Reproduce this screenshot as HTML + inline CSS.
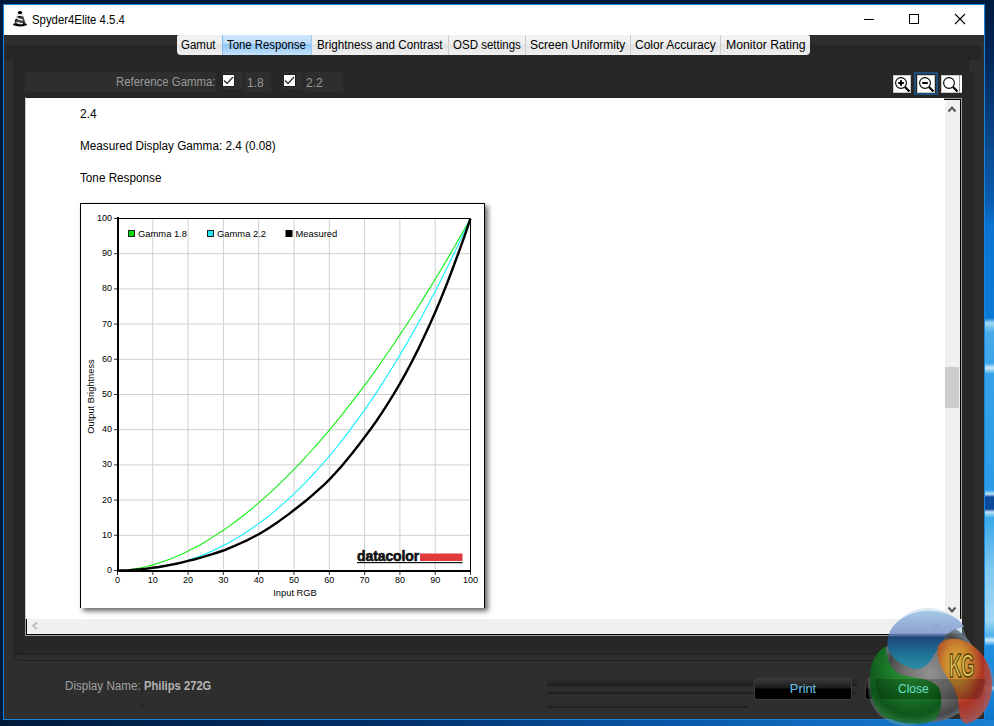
<!DOCTYPE html>
<html><head><meta charset="utf-8">
<style>
*{margin:0;padding:0;box-sizing:border-box}
html,body{width:994px;height:726px;overflow:hidden;background:#001a3a;font-family:"Liberation Sans",sans-serif;position:relative}
.a{position:absolute}
#desk-r{left:984px;top:0;width:10px;height:726px;background:linear-gradient(180deg,#001a3d 0px,#02285a 60px,#0a4a90 150px,#0a5eb4 205px,#0a74d4 225px,#0a7ad8 318px,#a0d8f5 323px,#48aaea 332px,#3aa6ea 363px,#d0ecfa 368px,#34a2e8 374px,#2a9ce6 490px,#c0e4f8 494px,#0a4a9a 497px,#0a4a9a 509px,#c0e4f8 512px,#38a8ea 518px,#80c8f2 570px,#a0d8f5 620px,#50b0ec 636px,#d0ecfa 640px,#1e90e0 646px,#1a88dc 685px,#a0d0f0 688px,#1a86da 692px,#0a70c8 726px)}
#desk-b{left:0;top:720px;width:994px;height:6px;background:linear-gradient(90deg,#001a3a 0px,#02306a 400px,#0a5cb0 700px,#1a80d0 994px)}
#win{left:3px;top:4px;width:982px;height:716px;background:#1883d7}
#title{left:4px;top:5px;width:980px;height:30px;background:#fff}
#body{left:4px;top:35px;width:980px;height:684px;background:#2e2e2e}
.ttl{font-size:12px;color:#000;white-space:nowrap}
.tabbar{left:5px;top:45px;width:977px;height:15px;background:#262626;border-radius:4px}
.tabs{left:177px;top:35px;height:20px;width:633px;background:linear-gradient(#f3f3f3 0%,#efefef 42%,#e5e5e5 52%,#efefef 100%);border-radius:2px 2px 4px 4px;overflow:hidden}
.tab{position:absolute;top:0;height:20px;font-size:12px;color:#000;white-space:nowrap;line-height:20px}
.tab.sep{border-left:1px solid #cdcdcd}
.tab.sel{background:linear-gradient(#d2e7fc 0%,#bcdcfa 40%,#8cc4f5 50%,#a6d2f8 70%,#c4e2fb 100%);border-left:1px solid #7fbaf0;border-right:1px solid #9cc9f0}
.tab span{display:inline-block;transform-origin:0 0}
.vline{background:#232323}
.gam{font-size:12px;color:#9a9a9a;white-space:nowrap}
.cell{background:#2e2e2e}
.chk{background:#fff}
.zb{background:#fff;border:1px solid #c8c8c8}
#content{left:25px;top:97px;width:920px;height:522px;background:#fff;border-left:1px solid #c8c8c8;border-top:1px solid #1e1e1e}
.txt{font-size:12px;color:#000;white-space:nowrap}
.ct{font-family:"Liberation Sans",sans-serif;font-size:9px;fill:#000}
.dc{font-family:"Liberation Sans",sans-serif;font-size:14px;font-weight:bold;fill:#111;stroke:#111;stroke-width:0.6px;letter-spacing:-0.1px}
</style></head><body>
<div class="a" id="desk-r"></div>
<div class="a" id="desk-b"></div>
<div class="a" id="win"></div>
<div class="a" id="title"></div>
<div class="a" id="body"></div>

<!-- title bar -->
<svg class="a" style="left:10px;top:8px" width="20" height="20" viewBox="0 0 20 20">
  <ellipse cx="10" cy="4.6" rx="2.2" ry="1.7" fill="#000"/>
  <path d="M7.5,6 L12.5,6 L15.5,15 L4.5,15 Z" fill="#444"/>
  <ellipse cx="10" cy="16.5" rx="7" ry="1.9" fill="#000"/>
  <path d="M6.5,8 Q10,5.8 13,7.8" fill="none" stroke="#fff" stroke-width="1.6"/>
  <path d="M6,9.5 Q8.5,11.5 12.5,12" fill="none" stroke="#fff" stroke-width="1.6"/>
  <path d="M6.5,14.5 Q10,15.8 13,15.6" fill="none" stroke="#eee" stroke-width="1.4"/>
  <path d="M8,8.8 L11,8.8" stroke="#000" stroke-width="1"/>
  <path d="M5,13 L7,11" stroke="#000" stroke-width="1.3"/>
</svg>
<div class="a ttl" style="left:32px;top:13px;transform:scaleX(0.947);transform-origin:0 0">Spyder4Elite 4.5.4</div>
<div class="a" style="left:864px;top:19px;width:10px;height:1px;background:#000"></div>
<div class="a" style="left:909px;top:14px;width:10px;height:10px;border:1px solid #000"></div>
<svg class="a" style="left:954px;top:13px" width="12" height="12" viewBox="0 0 12 12"><path d="M1,1 L11,11 M11,1 L1,11" stroke="#000" stroke-width="1.1"/></svg>

<!-- tab bar -->
<div class="a tabbar"></div>
<div class="a tabs">
  <div class="tab" style="left:0;width:45px;padding-left:4px"><span style="transform:scaleX(0.96)">Gamut</span></div>
  <div class="tab sel" style="left:45px;width:90px;padding-left:4px"><span style="transform:scaleX(0.945)">Tone Response</span></div>
  <div class="tab" style="left:135px;width:136px;padding-left:5px"><span style="transform:scaleX(0.975)">Brightness and Contrast</span></div>
  <div class="tab sep" style="left:271px;width:77px;padding-left:4px"><span style="transform:scaleX(0.96)">OSD settings</span></div>
  <div class="tab sep" style="left:348px;width:105px;padding-left:4px"><span style="transform:scaleX(1.0)">Screen Uniformity</span></div>
  <div class="tab sep" style="left:453px;width:90px;padding-left:4px"><span style="transform:scaleX(1.0)">Color Accuracy</span></div>
  <div class="tab sep" style="left:543px;width:90px;padding-left:5px"><span style="transform:scaleX(1.02)">Monitor Rating</span></div>
</div>

<!-- panel lines -->
<div class="a" style="left:14px;top:60px;width:961px;height:595px;background:#272727;border-left:1px solid #212121;border-bottom:1px solid #212121;border-bottom-left-radius:6px"></div>
<div class="a" style="left:14px;top:652px;width:961px;height:9px;border-left:1px solid #222;border-bottom:1px solid #222;border-bottom-left-radius:6px"></div>
<div class="a" style="left:959px;top:60px;width:1px;height:12px;background:#232323"></div>
<div class="a" style="left:968px;top:60px;width:1px;height:12px;background:#232323"></div>
<div class="a" style="left:969px;top:60px;width:6px;height:12px;background:#2e2e2e"></div>

<!-- reference gamma -->
<div class="a cell" style="left:25px;top:72px;width:191px;height:20px"></div>
<div class="a gam" style="left:116px;top:75px;transform:scaleX(0.95);transform-origin:0 0">Reference Gamma:</div>
<div class="a cell" style="left:222px;top:72px;width:21px;height:17px"></div>
<div class="a chk" style="left:222px;top:74px;width:13px;height:13px;border:1px solid #1e1e1e"></div>
<svg class="a" style="left:223px;top:75px" width="11" height="11"><path d="M1,5.5 L4,8.5 L10,2" fill="none" stroke="#333" stroke-width="1.4"/></svg>
<div class="a cell" style="left:245px;top:72px;width:26px;height:20px"></div>
<div class="a gam" style="left:247px;top:76px">1.8</div>
<div class="a cell" style="left:282px;top:72px;width:21px;height:17px"></div>
<div class="a chk" style="left:283px;top:74px;width:13px;height:13px;border:1px solid #1e1e1e"></div>
<svg class="a" style="left:284px;top:75px" width="11" height="11"><path d="M1,5.5 L4,8.5 L10,2" fill="none" stroke="#333" stroke-width="1.4"/></svg>
<div class="a cell" style="left:305px;top:72px;width:38px;height:20px"></div>
<div class="a gam" style="left:306px;top:76px">2.2</div>

<!-- zoom buttons -->
<div class="a zb" style="left:893px;top:75px;width:18px;height:18px"></div>
<div class="a" style="left:914px;top:72px;width:24px;height:23px;border:2px solid #1d4d78"></div>
<div class="a zb" style="left:917px;top:75px;width:18px;height:18px"></div>
<div class="a zb" style="left:941px;top:75px;width:21px;height:18px;border-right:none"></div>
<div class="a" style="left:959px;top:75px;width:1px;height:18px;background:#9a9a9a"></div>
<svg class="a" style="left:893px;top:75px" width="70" height="18" viewBox="0 0 70 18">
  <circle cx="8" cy="8" r="5.4" fill="none" stroke="#000" stroke-width="1.1"/>
  <path d="M12,12 L16.5,16.5" stroke="#000" stroke-width="2.2"/>
  <path d="M5.2,8 H10.8 M8,5.2 V10.8" stroke="#000" stroke-width="2"/>
  <circle cx="32" cy="8" r="5.4" fill="none" stroke="#000" stroke-width="1.1"/>
  <path d="M36,12 L40.5,16.5" stroke="#000" stroke-width="2.2"/>
  <path d="M29.2,8 H34.8" stroke="#000" stroke-width="2"/>
  <circle cx="56" cy="8" r="5.4" fill="none" stroke="#000" stroke-width="1.1"/>
  <path d="M60,12 L64.5,16.5" stroke="#000" stroke-width="2.2"/>
</svg>

<!-- content -->
<div class="a" id="content"></div>
<div class="a txt" style="left:80px;top:107px">2.4</div>
<div class="a txt" style="left:80px;top:139px;transform:scaleX(0.978);transform-origin:0 0">Measured Display Gamma: 2.4 (0.08)</div>
<div class="a txt" style="left:80px;top:171px;transform:scaleX(0.976);transform-origin:0 0">Tone Response</div>

<!-- chart frame -->
<div class="a" style="left:80px;top:203px;width:405px;height:405px;background:#fff;border:1px solid #000;border-bottom:none;box-shadow:3px 3px 5px rgba(0,0,0,.6)"></div>
<svg class="a" style="left:0;top:0" width="994" height="726" viewBox="0 0 994 726">
<line x1="152.8" y1="219" x2="152.8" y2="569" stroke="#cfcfcf" stroke-width="1"/>
<line x1="119" y1="535.3" x2="470" y2="535.3" stroke="#cfcfcf" stroke-width="1"/>
<line x1="188.1" y1="219" x2="188.1" y2="569" stroke="#cfcfcf" stroke-width="1"/>
<line x1="119" y1="500.1" x2="470" y2="500.1" stroke="#cfcfcf" stroke-width="1"/>
<line x1="223.4" y1="219" x2="223.4" y2="569" stroke="#cfcfcf" stroke-width="1"/>
<line x1="119" y1="464.9" x2="470" y2="464.9" stroke="#cfcfcf" stroke-width="1"/>
<line x1="258.7" y1="219" x2="258.7" y2="569" stroke="#cfcfcf" stroke-width="1"/>
<line x1="119" y1="429.7" x2="470" y2="429.7" stroke="#cfcfcf" stroke-width="1"/>
<line x1="294.0" y1="219" x2="294.0" y2="569" stroke="#cfcfcf" stroke-width="1"/>
<line x1="119" y1="394.5" x2="470" y2="394.5" stroke="#cfcfcf" stroke-width="1"/>
<line x1="329.3" y1="219" x2="329.3" y2="569" stroke="#cfcfcf" stroke-width="1"/>
<line x1="119" y1="359.3" x2="470" y2="359.3" stroke="#cfcfcf" stroke-width="1"/>
<line x1="364.6" y1="219" x2="364.6" y2="569" stroke="#cfcfcf" stroke-width="1"/>
<line x1="119" y1="324.1" x2="470" y2="324.1" stroke="#cfcfcf" stroke-width="1"/>
<line x1="399.9" y1="219" x2="399.9" y2="569" stroke="#cfcfcf" stroke-width="1"/>
<line x1="119" y1="288.9" x2="470" y2="288.9" stroke="#cfcfcf" stroke-width="1"/>
<line x1="435.2" y1="219" x2="435.2" y2="569" stroke="#cfcfcf" stroke-width="1"/>
<line x1="119" y1="253.7" x2="470" y2="253.7" stroke="#cfcfcf" stroke-width="1"/>
<path d="M118,218.5 H470.5 V570" fill="none" stroke="#000" stroke-width="1"/>
<line x1="114" y1="570.5" x2="117" y2="570.5" stroke="#333" stroke-width="1"/>
<text x="112" y="573.0" text-anchor="end" class="ct">0</text>
<line x1="117.5" y1="572" x2="117.5" y2="575" stroke="#333" stroke-width="1"/>
<text x="117.5" y="583" text-anchor="middle" class="ct">0</text>
<line x1="114" y1="535.3" x2="117" y2="535.3" stroke="#333" stroke-width="1"/>
<text x="112" y="537.8" text-anchor="end" class="ct">10</text>
<line x1="152.8" y1="572" x2="152.8" y2="575" stroke="#333" stroke-width="1"/>
<text x="152.8" y="583" text-anchor="middle" class="ct">10</text>
<line x1="114" y1="500.1" x2="117" y2="500.1" stroke="#333" stroke-width="1"/>
<text x="112" y="502.6" text-anchor="end" class="ct">20</text>
<line x1="188.1" y1="572" x2="188.1" y2="575" stroke="#333" stroke-width="1"/>
<text x="188.1" y="583" text-anchor="middle" class="ct">20</text>
<line x1="114" y1="464.9" x2="117" y2="464.9" stroke="#333" stroke-width="1"/>
<text x="112" y="467.4" text-anchor="end" class="ct">30</text>
<line x1="223.4" y1="572" x2="223.4" y2="575" stroke="#333" stroke-width="1"/>
<text x="223.4" y="583" text-anchor="middle" class="ct">30</text>
<line x1="114" y1="429.7" x2="117" y2="429.7" stroke="#333" stroke-width="1"/>
<text x="112" y="432.2" text-anchor="end" class="ct">40</text>
<line x1="258.7" y1="572" x2="258.7" y2="575" stroke="#333" stroke-width="1"/>
<text x="258.7" y="583" text-anchor="middle" class="ct">40</text>
<line x1="114" y1="394.5" x2="117" y2="394.5" stroke="#333" stroke-width="1"/>
<text x="112" y="397.0" text-anchor="end" class="ct">50</text>
<line x1="294.0" y1="572" x2="294.0" y2="575" stroke="#333" stroke-width="1"/>
<text x="294.0" y="583" text-anchor="middle" class="ct">50</text>
<line x1="114" y1="359.3" x2="117" y2="359.3" stroke="#333" stroke-width="1"/>
<text x="112" y="361.8" text-anchor="end" class="ct">60</text>
<line x1="329.3" y1="572" x2="329.3" y2="575" stroke="#333" stroke-width="1"/>
<text x="329.3" y="583" text-anchor="middle" class="ct">60</text>
<line x1="114" y1="324.1" x2="117" y2="324.1" stroke="#333" stroke-width="1"/>
<text x="112" y="326.6" text-anchor="end" class="ct">70</text>
<line x1="364.6" y1="572" x2="364.6" y2="575" stroke="#333" stroke-width="1"/>
<text x="364.6" y="583" text-anchor="middle" class="ct">70</text>
<line x1="114" y1="288.9" x2="117" y2="288.9" stroke="#333" stroke-width="1"/>
<text x="112" y="291.4" text-anchor="end" class="ct">80</text>
<line x1="399.9" y1="572" x2="399.9" y2="575" stroke="#333" stroke-width="1"/>
<text x="399.9" y="583" text-anchor="middle" class="ct">80</text>
<line x1="114" y1="253.7" x2="117" y2="253.7" stroke="#333" stroke-width="1"/>
<text x="112" y="256.2" text-anchor="end" class="ct">90</text>
<line x1="435.2" y1="572" x2="435.2" y2="575" stroke="#333" stroke-width="1"/>
<text x="435.2" y="583" text-anchor="middle" class="ct">90</text>
<line x1="114" y1="218.5" x2="117" y2="218.5" stroke="#333" stroke-width="1"/>
<text x="112" y="221.0" text-anchor="end" class="ct">100</text>
<line x1="470.5" y1="572" x2="470.5" y2="575" stroke="#333" stroke-width="1"/>
<text x="470.5" y="583" text-anchor="middle" class="ct">100</text>
<path d="M117.5,570.5 L123.4,570.3 L129.3,569.7 L135.2,568.9 L141.0,567.8 L146.9,566.5 L152.8,564.9 L158.7,563.1 L164.6,561.1 L170.4,558.9 L176.3,556.5 L182.2,553.9 L188.1,551.1 L194.0,548.1 L199.9,544.9 L205.8,541.5 L211.6,537.9 L217.5,534.1 L223.4,530.2 L229.3,526.1 L235.2,521.8 L241.1,517.3 L246.9,512.7 L252.8,507.8 L258.7,502.9 L264.6,497.7 L270.5,492.4 L276.4,486.9 L282.2,481.2 L288.1,475.4 L294.0,469.4 L299.9,463.3 L305.8,457.0 L311.6,450.5 L317.5,443.9 L323.4,437.1 L329.3,430.1 L335.2,423.1 L341.1,415.8 L346.9,408.4 L352.8,400.8 L358.7,393.1 L364.6,385.3 L370.5,377.3 L376.4,369.1 L382.2,360.8 L388.1,352.3 L394.0,343.7 L399.9,334.9 L405.8,326.0 L411.7,317.0 L417.6,307.8 L423.4,298.4 L429.3,288.9 L435.2,279.3 L441.1,269.5 L447.0,259.6 L452.8,249.5 L458.7,239.3 L464.6,229.0 L470.5,218.5" fill="none" stroke="#10f010" stroke-width="1.1"/>
<path d="M117.5,570.5 L123.4,570.5 L129.3,570.3 L135.2,570.0 L141.0,569.6 L146.9,569.0 L152.8,568.3 L158.7,567.4 L164.6,566.3 L170.4,565.1 L176.3,563.7 L182.2,562.1 L188.1,560.3 L194.0,558.3 L199.9,556.2 L205.8,553.8 L211.6,551.3 L217.5,548.5 L223.4,545.6 L229.3,542.5 L235.2,539.1 L241.1,535.5 L246.9,531.8 L252.8,527.8 L258.7,523.6 L264.6,519.2 L270.5,514.6 L276.4,509.7 L282.2,504.7 L288.1,499.4 L294.0,493.9 L299.9,488.2 L305.8,482.2 L311.6,476.0 L317.5,469.6 L323.4,463.0 L329.3,456.1 L335.2,449.0 L341.1,441.6 L346.9,434.1 L352.8,426.2 L358.7,418.2 L364.6,409.9 L370.5,401.4 L376.4,392.6 L382.2,383.6 L388.1,374.3 L394.0,364.8 L399.9,355.1 L405.8,345.1 L411.7,334.8 L417.6,324.3 L423.4,313.6 L429.3,302.6 L435.2,291.3 L441.1,279.8 L447.0,268.1 L452.8,256.1 L458.7,243.8 L464.6,231.3 L470.5,218.5" fill="none" stroke="#10f0ff" stroke-width="1.1"/>
<path d="M117.5,570.5 L123.4,570.4 L129.3,570.2 L135.2,569.8 L141.0,569.3 L146.9,568.6 L152.8,567.8 L158.7,567.0 L164.6,566.0 L170.4,564.9 L176.3,563.7 L182.2,562.4 L188.1,560.9 L194.0,559.5 L199.9,557.9 L205.8,556.2 L211.6,554.4 L217.5,552.5 L223.4,550.5 L229.3,548.1 L235.2,545.7 L241.1,543.0 L246.9,540.3 L252.8,537.3 L258.7,534.2 L264.6,530.7 L270.5,527.0 L276.4,523.1 L282.2,518.9 L288.1,514.6 L294.0,510.0 L299.9,505.5 L305.8,500.8 L311.6,495.9 L317.5,490.7 L323.4,485.3 L329.3,479.6 L335.2,473.3 L341.1,466.7 L346.9,459.8 L352.8,452.6 L358.7,445.0 L364.6,437.1 L370.5,429.2 L376.4,421.0 L382.2,412.3 L388.1,403.2 L394.0,393.7 L399.9,383.7 L405.8,373.1 L411.7,362.0 L417.6,350.4 L423.4,338.3 L429.3,325.6 L435.2,312.3 L441.1,298.2 L447.0,283.5 L452.8,268.2 L458.7,252.3 L464.6,235.8 L470.5,218.5" fill="none" stroke="#000" stroke-width="2.4"/>
<line x1="118" y1="217" x2="118" y2="572" stroke="#000" stroke-width="2"/>
<line x1="117" y1="571" x2="471" y2="571" stroke="#000" stroke-width="2"/>
<rect x="128.5" y="230.5" width="6" height="6" fill="#00e000" stroke="#222" stroke-width="1"/>
<text x="138" y="237" class="ct" style="font-size:9.4px">Gamma 1.8</text>
<rect x="207.5" y="230.5" width="6" height="6" fill="#22e6f0" stroke="#222" stroke-width="1"/>
<text x="217" y="237" class="ct" style="font-size:9.4px">Gamma 2.2</text>
<rect x="286" y="230.5" width="6" height="6" fill="#000" stroke="#000" stroke-width="1"/>
<text x="295.5" y="237" class="ct" style="font-size:9.4px">Measured</text>
<text x="295" y="596" text-anchor="middle" class="ct" style="font-size:9.3px">Input RGB</text>
<text x="0" y="0" text-anchor="middle" class="ct" style="font-size:9.3px" transform="translate(93.6,396.5) rotate(-90)">Output Brightness</text>
<text x="357" y="560.5" class="dc">datacolor</text>
<rect x="420" y="553.5" width="42.5" height="7.5" fill="#e03a3a"/>
<rect x="357" y="562" width="105.5" height="1.2" fill="#111"/>
</svg>

<!-- scrollbars -->
<div class="a" style="left:944px;top:98px;width:18px;height:1px;background:#a0a0a0"></div>
<div class="a" style="left:944px;top:99px;width:17px;height:1px;background:#000"></div>
<div class="a" style="left:945px;top:100px;width:15px;height:519px;background:#f0f0f0"></div>
<div class="a" style="left:945px;top:367px;width:14px;height:41px;background:#cdcdcd"></div>
<div class="a" style="left:960px;top:99px;width:1px;height:520px;background:#000"></div>
<div class="a" style="left:961px;top:98px;width:1px;height:521px;background:#a0a0a0"></div>
<div class="a" style="left:25px;top:619px;width:937px;height:17px;background:#a0a0a0"></div>
<div class="a" style="left:26px;top:619px;width:936px;height:16px;background:#000"></div>
<div class="a" style="left:27px;top:619px;width:935px;height:15px;background:#f0f0f0"></div>
<svg class="a" style="left:945px;top:99px" width="15" height="535">
  <path d="M3.5,12.5 L7,8.5 L10.5,12.5" fill="none" stroke="#555" stroke-width="2"/>
  <path d="M3.5,508.5 L7,512.5 L10.5,508.5" fill="none" stroke="#555" stroke-width="2"/>
</svg>
<svg class="a" style="left:25px;top:619px" width="937" height="16">
  <path d="M12,3.5 L8,6.8 L12,10" fill="none" stroke="#c0c0c0" stroke-width="2"/>
  <path d="M908.5,3.5 L912.5,6.8 L908.5,10" fill="none" stroke="#8a8ab8" stroke-width="2"/>
</svg>

<!-- bottom -->
<div class="a gam" style="left:65px;top:679px;color:#a0a0a0;transform:scaleX(0.97);transform-origin:0 0">Display Name:</div>
<div class="a gam" style="left:144px;top:679px;color:#b4b4b4;font-weight:bold;transform:scaleX(0.935);transform-origin:0 0">Philips 272G</div>
<div class="a" style="left:142px;top:689px;width:1px;height:5px;background:#1c1c1c"></div><div class="a" style="left:142px;top:703px;width:1px;height:4px;background:#1c1c1c"></div>
<div class="a" style="left:547px;top:679px;width:310px;height:7px;background:linear-gradient(#2a2a2a,#242424);border-bottom:1px solid #1c1c1c"></div>
<div class="a" style="left:547px;top:689px;width:310px;height:5px;background:linear-gradient(#303030,#262626);border-bottom:1px solid #1c1c1c"></div>
<div class="a" style="left:547px;top:704px;width:201px;height:4px;background:linear-gradient(#2e2e2e,#262626);border-bottom:1px solid #1c1c1c"></div>
<div class="a" style="left:754px;top:678px;width:98px;height:22px;border-radius:3px;background:linear-gradient(#3a3a3a,#1a1a1a 45%,#000 50%,#000);border:1px solid #3c3c3c"></div>
<div class="a" style="left:754px;top:681px;width:98px;text-align:center;font-size:12.8px;color:#64c4ea">Print</div>
<div class="a" style="left:865px;top:678px;width:97px;height:22px;border-radius:3px;background:linear-gradient(#3a3a3a,#1a1a1a 45%,#000 50%,#000);border:1px solid #3c3c3c"></div>


<!-- KG logo -->
<svg class="a" style="left:862px;top:602px" width="132" height="124" viewBox="0 0 132 124">
  <defs>
    <clipPath id="lc"><circle cx="68" cy="70" r="56"/></clipPath>
    <radialGradient id="gs" cx="0.5" cy="0.52" r="0.5"><stop offset="0" stop-color="#9a9a9a"/><stop offset="0.5" stop-color="#787878"/><stop offset="0.85" stop-color="#4a4a4a"/><stop offset="1" stop-color="#6a7a88"/></radialGradient>
    <linearGradient id="gbl" x1="0" y1="0" x2="0" y2="1"><stop offset="0" stop-color="#9cc4e4"/><stop offset="0.38" stop-color="#8a9cd0"/><stop offset="0.45" stop-color="#1e4a80"/><stop offset="0.75" stop-color="#1f7aa0"/><stop offset="1" stop-color="#2a96b0"/></linearGradient>
    <radialGradient id="gg" cx="0.6" cy="0.25" r="0.85"><stop offset="0" stop-color="#3aa844"/><stop offset="0.4" stop-color="#1a8428"/><stop offset="0.75" stop-color="#0e5a1a"/><stop offset="1" stop-color="#3a8a4a"/></radialGradient>
    <radialGradient id="gr" cx="0.35" cy="0.3" r="0.75"><stop offset="0" stop-color="#e8c040"/><stop offset="0.3" stop-color="#d89030"/><stop offset="0.65" stop-color="#b83424"/><stop offset="1" stop-color="#a85a5a"/></radialGradient>
  </defs>
  <g opacity="0.92">
  <circle cx="66" cy="46" r="40" fill="#98b8d8" opacity="0.4"/>
  <circle cx="44" cy="86" r="38" fill="#88b0a0" opacity="0.35"/>
  <circle cx="100" cy="80" r="32" fill="#c09090" opacity="0.35"/>
  <circle cx="68" cy="70" r="50" fill="url(#gs)"/>
  <path d="M26,46 C22,22 46,9 66,9 C84,9 98,16 102,25 C90,26 82,34 77,44 C72,54 68,62 60,66 C55,68 50,67 46,65 C36,61 29,55 26,46 Z" fill="url(#gbl)"/>
  <path d="M8,76 C8,60 14,50 24,44 C24,58 30,70 40,73 C54,77 70,76 77,86 C81,96 80,110 73,118 C62,124 34,123 20,113 C11,105 8,92 8,76 Z" fill="url(#gg)"/>
  <path d="M76,44 C82,37 90,36 96,37 C114,41 129,58 130,80 C131,102 120,118 104,122 C99,120 97,114 97,106 C97,96 92,84 86,76 C79,67 74,56 76,44 Z" fill="url(#gr)"/>
  </g>
  <rect x="0" y="77" width="132" height="20" fill="#000" opacity="0.2" clip-path="url(#lc)"/>
  <text x="0" y="0" font-family="Liberation Sans" font-weight="bold" font-size="24" fill="#e0c050" stroke="#5a4010" stroke-width="1.1" transform="translate(87,75) scale(0.72,1.39)" letter-spacing="-0.5">KG</text>
  <text x="36" y="90.5" font-family="Liberation Sans" font-size="12" fill="#6ee0cc">Close</text>
</svg>
</body></html>
